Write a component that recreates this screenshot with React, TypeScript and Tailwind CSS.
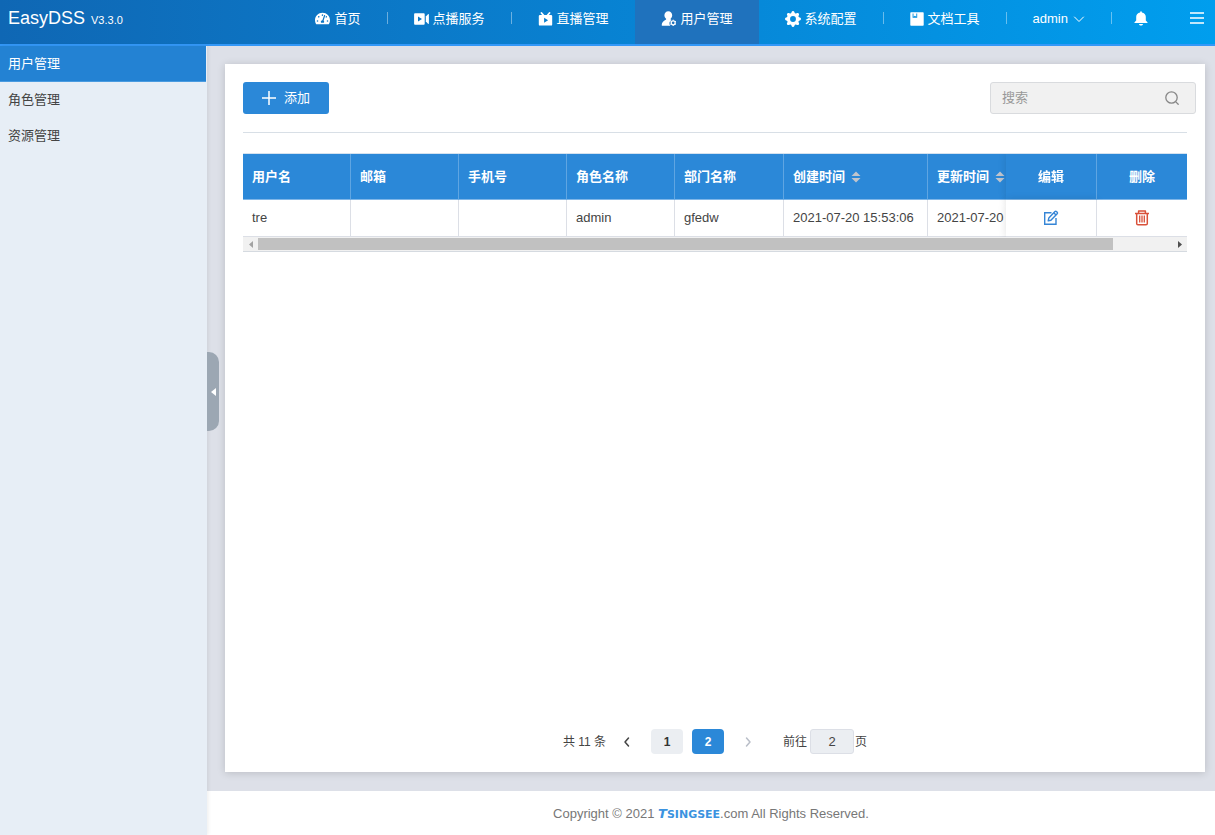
import React, { useState } from "react";
import { FaTachometerAlt } from "react-icons/fa";
import { BsGearFill } from "react-icons/bs";

const CameraIcon = () => (
  <svg viewBox="0 0 15 12" className="h-3 w-[15px]" fill="currentColor" aria-hidden="true">
    <path
      fillRule="evenodd"
      d="M1 .3h8.800a.9.9 0 0 1 .9.9v9.600a.9.9 0 0 1-.9.9H1a.9.9 0 0 1-.9-.9V1.200A.9.9 0 0 1 1 .3zM4 3.400v5.200L8 6z"
    />
    <path d="M11.800 3.600l2.200-2.300c.4-.4.900-.2.900.3v8.800c0 .5-.5.700-.9.300l-2.200-2.300z" />
  </svg>
);

const LiveIcon = () => (
  <svg viewBox="0 0 14 14" className="h-[14px] w-[15px]" aria-hidden="true">
    <path d="M3 1 5.600 4M11 1 8.400 4" stroke="currentColor" strokeWidth="1.800" strokeLinecap="round" />
    <path
      fill="currentColor"
      fillRule="evenodd"
      d="M1.500 2.900h11a1.200 1.200 0 0 1 1.200 1.200v8.300a1.200 1.200 0 0 1-1.200 1.200h-11A1.200 1.200 0 0 1 .3 12.400V4.100a1.200 1.200 0 0 1 1.200-1.200zM5.600 5.800v5l4-2.500z"
    />
  </svg>
);

const UserIcon = () => (
  <svg viewBox="0 0 15 15" className="h-[15px] w-4" fill="currentColor" aria-hidden="true">
    <path d="M6.800.2c2.300 0 3.900 1.700 3.900 4 0 1.500-.6 2.700-1.600 3.500v.9l1 .5a3.500 3.500 0 0 0-1.300 5.600H.8c-.5 0-.7-.3-.6-.8.3-2.300 1.200-3.700 4.400-5.300v-.9C3.600 6.900 2.900 5.700 2.900 4.200c0-2.300 1.600-4 3.900-4z" />
    <circle cx="11.700" cy="11.800" r="2" fill="none" stroke="currentColor" strokeWidth="1.300" />
    <path d="M11.700 8.700v1M11.700 14v1M8.900 10.200l.9.500M13.600 12.900l.9.500M8.900 13.400l.9-.5M13.600 10.700l.9-.5" stroke="currentColor" strokeWidth="1" />
  </svg>
);

const DocIcon = () => (
  <svg viewBox="0 0 14 14" className="size-[14px]" fill="currentColor" aria-hidden="true">
    <path fillRule="evenodd" d="M1 .3h12c.4 0 .7.3.7.7v12c0 .4-.3.700-.7.700H1c-.4 0-.7-.3-.7-.7V1C.3.600.6.300 1 .3zM2.600 1.500v4.200h4.600V1.500h-.9v3.300L4.900 3.800 3.500 4.800V1.500z" />
  </svg>
);

const BellIcon = () => (
  <svg viewBox="0 0 14 15" className="h-[15px] w-[14px]" fill="currentColor" aria-hidden="true">
    <path d="M7 .3c.5 0 .9.4.9.9v.2c2.300.5 3.900 2.200 3.900 4.300v3.800l1.600 1.700c.4.400.2.900-.3.900H.9c-.5 0-.7-.5-.3-.9l1.600-1.700V5.700c0-2.100 1.600-3.800 3.900-4.300v-.2c0-.5.4-.9.9-.9zM5 13h4c-.2.900-1 1.600-2 1.600S5.200 13.900 5 13z" />
  </svg>
);

const MenuIcon = () => (
  <svg viewBox="0 0 14 12" className="h-3 w-[14px]" aria-hidden="true">
    <path d="M0 1h14M0 6h14M0 11h14" stroke="currentColor" strokeWidth="1.500" />
  </svg>
);

const Chevron = ({ d, className }: { d: string; className: string }) => (
  <svg viewBox="0 0 12 12" className={className} fill="none" stroke="currentColor" strokeLinecap="round" strokeLinejoin="round" aria-hidden="true">
    <path d={d} />
  </svg>
);

const EditIcon = () => (
  <svg viewBox="0 0 16 16" className="size-4" fill="none" stroke="currentColor" strokeWidth="1.400" aria-hidden="true">
    <path d="M8.500 2.700H1.700v11.600h11.300V8" />
    <path d="M5.200 10.900l.6-2.800L12 1.500c.4-.4 1-.4 1.400 0l.8.8c.4.4.4 1 0 1.400L7.900 10.300z" strokeLinejoin="round" />
    <path d="M10.800 2.800l2.200 2.200" />
  </svg>
);

const TrashIcon = () => (
  <svg viewBox="0 0 16 16" className="size-4" fill="none" stroke="currentColor" strokeWidth="1.500" strokeLinejoin="round" aria-hidden="true">
    <path d="M1 3.500h14M4.600 3.300V1.100h6.800v2.200M2.700 3.700v9.700c0 .8.500 1.400 1.300 1.400h8c.8 0 1.300-.6 1.300-1.400V3.700" />
    <path d="M5.700 5.600v7M8 5.600v7M10.300 5.600v7" strokeWidth="1.300" />
  </svg>
);

const SortIcon = () => (
  <svg viewBox="0 0 10 12" className="h-3 w-[10px] text-[#c0c4cc]" fill="currentColor" aria-hidden="true">
    <path d="M5 .5l4.500 4.500h-9zM5 11.500L.5 7h9z" />
  </svg>
);

const NAV = [
  { label: "首页", icon: <FaTachometerAlt className="size-[15px]" /> },
  { label: "点播服务", icon: <CameraIcon /> },
  { label: "直播管理", icon: <LiveIcon /> },
  { label: "用户管理", icon: <UserIcon />, active: true },
  { label: "系统配置", icon: <BsGearFill className="size-4" /> },
  { label: "文档工具", icon: <DocIcon /> },
];

const SIDE = ["用户管理", "角色管理", "资源管理"];

const COLUMNS = [
  { label: "用户名" },
  { label: "邮箱" },
  { label: "手机号" },
  { label: "角色名称" },
  { label: "部门名称" },
  { label: "创建时间", sortable: true },
  { label: "更新时间", sortable: true },
];

const ROWS = [["tre", "", "", "admin", "gfedw", "2021-07-20 15:53:06", "2021-07-20 15:53:06"]];

function Separator() {
  return <span className="mt-3 h-3 w-px bg-white/40" />;
}

function Header() {
  return (
    <header className="flex h-[46px] items-stretch justify-between border-b-2 border-[#3398f8] bg-linear-to-r from-[#0f67b4] via-[#0882d2] to-[#009eee] text-white">
      <div className="flex items-baseline gap-[6px] pl-2">
        <span className="text-lg leading-9">EasyDSS</span>
        <span className="text-[11px]">V3.3.0</span>
      </div>
      <div className="flex">
        <nav className="flex">
          {NAV.map((item, i) => (
            <React.Fragment key={item.label}>
              <a
                href="#"
                aria-current={item.active ? "page" : undefined}
                className={
                  item.active
                    ? "flex items-start bg-[#1f72bd] px-[26px]"
                    : "flex items-start px-[26px]"
                }
              >
                <span className="flex h-[37px] items-center gap-1">
                  {item.icon}
                  {item.label}
                </span>
              </a>
              {!item.active && !NAV[i + 1]?.active && <Separator />}
            </React.Fragment>
          ))}
        </nav>
        <button type="button" className="flex h-[37px] items-center gap-[5px] px-[26px]">
          admin
          <Chevron d="M1.500 4l4.500 4.500L10.500 4" className="size-3" />
        </button>
        <Separator />
        <button type="button" aria-label="通知" className="flex h-[37px] items-center pr-[42px] pl-[22px]">
          <BellIcon />
        </button>
        <button type="button" aria-label="菜单" className="flex h-9 items-center pr-[11px]">
          <MenuIcon />
        </button>
      </div>
    </header>
  );
}

function Sidebar() {
  return (
    <aside className="relative z-10 w-[207px] shrink-0 bg-[#e7eef6] shadow-[1px_0_4px_rgba(0,0,0,0.08)]">
      <nav className="flex flex-col">
        {SIDE.map((label, i) => (
          <a
            key={label}
            href="#"
            className={
              i === 0
                ? "mr-px h-9 border-b border-[#4a9be0] bg-[#2382d3] pl-2 leading-9 text-white"
                : "mr-px h-9 pl-2 leading-9 text-[#444]"
            }
          >
            {label}
          </a>
        ))}
      </nav>
      <button
        type="button"
        aria-label="收起"
        className="absolute top-[306px] left-full flex h-[79px] w-3 items-center justify-center rounded-r-[10px] bg-[#9ca7b3] text-white"
      >
        <svg viewBox="0 0 5 8" className="h-2 w-[5px]" fill="currentColor" aria-hidden="true">
          <path d="M5 0v8L0 4z" />
        </svg>
      </button>
    </aside>
  );
}

function UserTable() {
  const head = "h-[46px] border-r border-b border-r-[#5fa5e2] border-b-[#7fb6e8] bg-[#2b88d8] px-[9px] font-bold";
  const cell = "h-[37px] border-r border-b border-[#dcdfe6] bg-white px-[9px]";
  return (
    <div className="mt-5 border-t border-b border-t-[#d5e2ef] border-b-[#d5dae0]">
      <div className="overflow-hidden">
        <table className="w-full min-w-[1009px] table-fixed border-separate border-spacing-0 text-left">
          <colgroup>
            <col className="w-[108px]" />
            <col className="w-[108px]" />
            <col className="w-[108px]" />
            <col className="w-[108px]" />
            <col className="w-[109px]" />
            <col className="w-36" />
            <col />
            <col className="w-[91px]" />
            <col className="w-[90px]" />
          </colgroup>
          <thead className="text-white">
            <tr>
              {COLUMNS.map((c) => (
                <th key={c.label} scope="col" className={head}>
                  {c.sortable ? (
                    <button type="button" className="flex items-center gap-[6px] font-bold">
                      {c.label}
                      <SortIcon />
                    </button>
                  ) : (
                    c.label
                  )}
                </th>
              ))}
              <th scope="col" className="sticky right-[90px] border-r border-b border-r-[#5fa5e2] border-b-[#7fb6e8] bg-[#2b88d8] text-center font-bold shadow-[0_0_8px_rgba(0,0,0,0.12)]">
                编辑
              </th>
              <th scope="col" className="sticky right-0 border-b border-[#7fb6e8] bg-[#2b88d8] text-center font-bold">
                删除
              </th>
            </tr>
          </thead>
          <tbody className="text-[#444]">
            {ROWS.map((row) => (
              <tr key={row[0]}>
                {row.map((value, i) => (
                  <td key={i} className={cell + " whitespace-nowrap"}>
                    {value}
                  </td>
                ))}
                <td className="sticky right-[90px] border-r border-b border-[#dcdfe6] bg-white shadow-[0_0_8px_rgba(0,0,0,0.12)]">
                  <button type="button" aria-label="编辑" className="mx-auto block text-[#3585d6]">
                    <EditIcon />
                  </button>
                </td>
                <td className="sticky right-0 border-b border-[#dcdfe6] bg-white">
                  <button type="button" aria-label="删除" className="mx-auto block text-[#d9513a]">
                    <TrashIcon />
                  </button>
                </td>
              </tr>
            ))}
          </tbody>
        </table>
      </div>
      <div className="flex h-[14px] items-center bg-[#f1f1f1]">
        <span className="flex w-[15px] justify-center text-[#a3a3a3]">
          <svg viewBox="0 0 4 7" className="h-[7px] w-1" fill="currentColor" aria-hidden="true">
            <path d="M4 0v7L0 3.500z" />
          </svg>
        </span>
        <div className="h-3 flex-1">
          <div className="h-full w-[93.500%] bg-[#c1c1c1]" />
        </div>
        <span className="flex w-[15px] justify-center text-[#505050]">
          <svg viewBox="0 0 4 7" className="h-[7px] w-1" fill="currentColor" aria-hidden="true">
            <path d="M0 0v7l4-3.500z" />
          </svg>
        </span>
      </div>
    </div>
  );
}

function Pagination() {
  const [page, setPage] = useState("2");
  return (
    <div className="mt-auto flex items-center justify-center text-xs text-[#444]">
      <span>共 11 条</span>
      <button type="button" aria-label="上一页" className="ml-[15px]">
        <Chevron d="M7.500 2L4 6l3.500 4" className="size-3 stroke-[1.500]" />
      </button>
      <button type="button" className="ml-[18px] h-[25px] w-8 rounded-[4px] bg-[#ebeef2] font-bold text-[#333]">
        1
      </button>
      <button type="button" aria-current="page" className="ml-[9px] h-[25px] w-8 rounded-[4px] bg-[#2b88d8] font-bold text-white">
        2
      </button>
      <button type="button" aria-label="下一页" disabled className="ml-[18px] text-[#b9bec8]">
        <Chevron d="M4.500 2L8 6l-3.500 4" className="size-3 stroke-[1.500]" />
      </button>
      <label htmlFor="page" className="ml-[29px]">
        前往
      </label>
      <input
        id="page"
        value={page}
        onChange={(e) => setPage(e.target.value)}
        className="mr-px ml-[3px] h-[25px] w-11 rounded-[3px] border border-[#dcdfe6] bg-[#ebeef2] text-center text-[13px]"
      />
      <span>页</span>
    </div>
  );
}

export default function App() {
  return (
    <div className="flex min-h-screen flex-col bg-white font-['Liberation_Sans','Noto_Sans_CJK_SC',sans-serif] text-[13px]">
      <Header />
      <div className="flex flex-1">
        <Sidebar />
        <div className="flex min-w-0 flex-1 flex-col">
          <main className="flex flex-1 flex-col bg-[#dde0e8] pt-[18px] pr-[10px] pb-[19px] pl-[18px]">
            <section className="flex flex-1 flex-col bg-white px-[18px] py-[18px] shadow-[0_1px_8px_rgba(0,0,0,0.16)]">
              <div className="-mr-[9px] flex items-start justify-between">
                <button type="button" className="flex h-8 w-[86px] items-center justify-center gap-2 rounded-[3px] bg-[#2b88d8] text-white">
                  <svg viewBox="0 0 14 14" className="size-[14px]" stroke="currentColor" strokeWidth="1.500" aria-hidden="true">
                    <path d="M7 0v14M0 7h14" />
                  </svg>
                  添加
                </button>
                <div className="flex h-8 w-[206px] items-center rounded-[3px] border border-[#d9dbde] bg-[#f1f1f1] pr-4 pl-[11px]">
                  <input
                    aria-label="搜索"
                    placeholder="搜索"
                    className="min-w-0 flex-1 bg-transparent outline-none placeholder:text-[#999]"
                  />
                  <svg viewBox="0 0 14 14" className="size-[14px] text-[#888]" fill="none" stroke="currentColor" strokeWidth="1.300" strokeLinecap="round" aria-hidden="true">
                    <circle cx="6.500" cy="6.500" r="5.700" />
                    <path d="M10.600 10.600l2.600 2.600" />
                  </svg>
                </div>
              </div>
              <hr className="mt-[18px] border-[#d8dfe6]" />
              <UserTable />
              <Pagination />
            </section>
          </main>
          <footer className="flex h-11 items-center justify-center pt-0.5 whitespace-pre text-[#777]">
            <span>Copyright © 2021 </span>
            <a href="#" className="font-['DejaVu_Sans',sans-serif] text-[11px] leading-4 font-bold text-[#3b93e0]">
              <span className="text-[13px] italic">T</span>SINGSEE
            </a>
            <span>.com All Rights Reserved.</span>
          </footer>
        </div>
      </div>
    </div>
  );
}
